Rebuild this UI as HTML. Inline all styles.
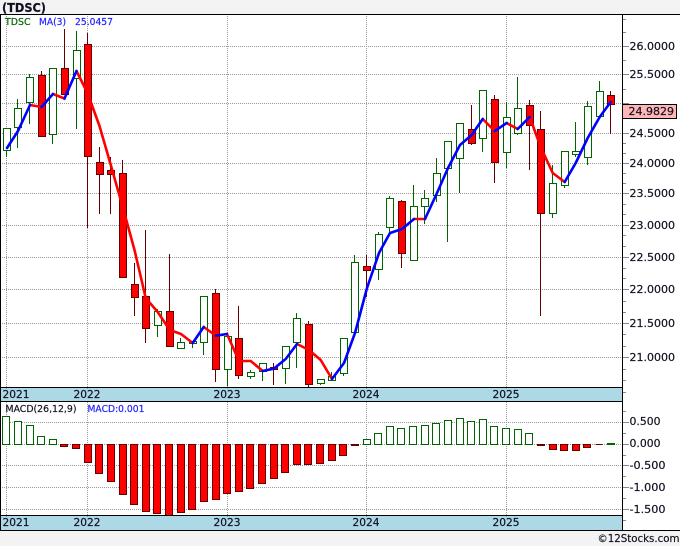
<!DOCTYPE html>
<html><head><meta charset="utf-8"><style>
html,body{margin:0;padding:0;background:#f3f3f3;width:680px;height:546px;overflow:hidden}
svg{display:block}
text{font-family:"DejaVu Sans","Liberation Sans",sans-serif;font-size:11px;fill:#111122;stroke:#111122;stroke-width:.2}
</style></head><body>
<svg width="680" height="546" viewBox="0 0 680 546" xmlns="http://www.w3.org/2000/svg">
<rect width="680" height="546" fill="#f3f3f3"/>
<rect x="0" y="14" width="680" height="516" fill="#fff"/>
<text x="2" y="12" style="font-weight:bold;font-size:12px" textLength="44" lengthAdjust="spacingAndGlyphs">(TDSC)</text>
<g shape-rendering="crispEdges">
<path fill="none" stroke="#999" stroke-dasharray="1 1" d="M0 46.5H622M0 74.5H622M0 103.5H622M0 133.5H622M0 163.5H622M0 193.5H622M0 225.5H622M0 257.5H622M0 289.5H622M0 323.5H622M0 357.5H622M0 422.5H622M0 444.5H622M0 465.5H622M0 487.5H622M0 509.5H622M6.5 14V530M87.5 14V530M227.5 14V530M366.5 14V530M506.5 14V530"/>
<path fill="none" stroke="#006400" d="M6.5 128V157M17.5 99V148M29.5 74V124M52.5 68V144M76.5 31V129M157.5 309V337M180.5 338V348M192.5 341V348M203.5 296V355M227.5 336V386M250.5 370V379M262.5 363V381M285.5 346V384M296.5 313V368M320.5 379V385M331.5 372V380M343.5 338V376M354.5 255V332M378.5 232V280M389.5 196V232M413.5 185V260M424.5 190V224M436.5 158V202M447.5 141V242M459.5 123V193M482.5 90V152M506.5 102V168M517.5 77V135M552.5 165V218M564.5 151V188M575.5 122V157M587.5 101V165M599.5 81V116"/>
<path fill="none" stroke="#660000" d="M41.5 71V136M64.5 29V94M87.5 33V228M99.5 147V214M110.5 157V214M122.5 160V277M134.5 263V316M145.5 230V343M169.5 254V346M215.5 289V382M238.5 306V379M273.5 363V385M308.5 321V387M366.5 255V297M401.5 200V268M471.5 105V145M494.5 95V183M529.5 100V170M540.5 111V316M610.5 91V134"/>
<path fill="#fff" stroke="#006400" d="M3.5 128.5h7v22h-7zM14.5 108.5h7v19h-7zM26.5 77.5h7v25h-7zM49.5 68.5h7v66h-7zM73.5 50.5h7v28h-7zM154.5 311.5h7v14h-7zM177.5 342.5h7v6h-7zM189.5 341.5h7v2h-7zM200.5 296.5h7v46h-7zM224.5 336.5h7v33h-7zM247.5 372.5h7v4h-7zM259.5 363.5h7v8h-7zM282.5 346.5h7v22h-7zM293.5 318.5h7v24h-7zM317.5 379.5h7v4h-7zM328.5 376.5h7v4h-7zM340.5 338.5h7v35h-7zM351.5 262.5h7v70h-7zM375.5 234.5h7v35h-7zM386.5 198.5h7v29h-7zM410.5 206.5h7v54h-7zM421.5 198.5h7v8h-7zM433.5 173.5h7v22h-7zM444.5 141.5h7v27h-7zM456.5 123.5h7v35h-7zM479.5 90.5h7v48h-7zM503.5 117.5h7v35h-7zM514.5 108.5h7v25h-7zM549.5 183.5h7v30h-7zM561.5 151.5h7v34h-7zM572.5 151.5h7v3h-7zM584.5 106.5h7v51h-7zM596.5 91.5h7v25h-7z"/>
<path fill="#f00" stroke="#660000" d="M38.5 75.5h7v61h-7zM61.5 68.5h7v26h-7zM84.5 44.5h7v112h-7zM96.5 162.5h7v12h-7zM107.5 170.5h7v4h-7zM119.5 173.5h7v104h-7zM131.5 284.5h7v13h-7zM142.5 296.5h7v32h-7zM166.5 311.5h7v35h-7zM212.5 293.5h7v76h-7zM235.5 338.5h7v37h-7zM270.5 367.5h7v2h-7zM305.5 324.5h7v60h-7zM363.5 266.5h7v4h-7zM398.5 201.5h7v52h-7zM468.5 129.5h7v14h-7zM491.5 99.5h7v63h-7zM526.5 105.5h7v20h-7zM537.5 129.5h7v84h-7zM607.5 95.5h7v9h-7z"/>
<path fill="#fff" stroke="#006400" d="M2.500 416.5h7v28h-7zM14.5 421.5h7v23h-7zM26.5 425.5h7v19h-7zM37.500 436.5h7v8h-7zM49.5 439.5h7v5h-7zM363.5 439.5h7v5h-7zM374.500 433.5h7v11h-7zM386.5 426.5h7v18h-7zM397.500 428.5h7v16h-7zM409.500 426.5h7v18h-7zM421.5 425.5h7v19h-7zM432.500 423.5h7v21h-7zM444.5 420.5h7v24h-7zM456.5 418.5h7v26h-7zM467.500 421.5h7v23h-7zM479.5 419.5h7v25h-7zM490.500 426.5h7v18h-7zM502.500 428.5h7v16h-7zM514.5 429.5h7v15h-7zM525.500 433.5h7v11h-7zM607.5 443.5h7v1h-7z"/>
<path fill="#f00" stroke="#660000" d="M60.500 444.5h7v2h-7zM72.500 444.5h7v4h-7zM84.5 444.5h7v18h-7zM95.500 444.5h7v29h-7zM107.5 444.5h7v37h-7zM119.5 444.5h7v50h-7zM130.500 444.5h7v60h-7zM142.5 444.5h7v67h-7zM153.500 444.5h7v69h-7zM165.500 444.5h7v71h-7zM177.5 444.5h7v68h-7zM188.500 444.5h7v65h-7zM200.5 444.5h7v57h-7zM212.5 444.5h7v55h-7zM223.500 444.5h7v49h-7zM235.5 444.5h7v47h-7zM246.500 444.5h7v44h-7zM258.500 444.5h7v39h-7zM270.5 444.5h7v34h-7zM281.500 444.5h7v28h-7zM293.5 444.5h7v20h-7zM304.500 444.5h7v20h-7zM316.500 444.5h7v19h-7zM328.5 444.5h7v16h-7zM339.500 444.5h7v11h-7zM351.5 444.5h7v1h-7zM537.5 444.5h7v1h-7zM549.5 444.5h7v5h-7zM560.500 444.5h7v6h-7zM572.5 444.5h7v6h-7zM583.500 444.5h7v3h-7zM595.500 444.5h7v0h-7z"/>
</g>
<g fill="none" stroke-width="2.6" stroke-linejoin="round" stroke-linecap="round">
<path stroke="#f00" d="M30 105L41.5 107M53 94L64.5 98.5M76.5 71L87.5 93L99.5 126L110.5 164L123 208L134.5 250L145.7 298L157.7 312L169.7 330L181 334L192.7 343M203.7 327L216 335.7M227 334L239 361L250.7 361L262.7 371M297 344L309 350L320.7 360L332 379M414 219L425 219M482.7 119L494.7 131M506.7 123L517.7 129M529.7 117L540.7 147L552.7 173L564.7 182"/>
<path stroke="#00f" d="M7 148L18 131L30 105M41.5 107L53 94M64.5 98.5L76.5 71M192.7 343L203.7 327M216 335.7L227 334M262.7 371L273.7 368.7L285.7 359L297 344M332 379L344 363L355 333L367 288L379 253L390 233L402 229L414 219M425 219L437 193L448 168L460 145L471.7 135L482.7 119M494.7 131L506.7 123M517.7 129L529.7 117M564.7 182L575.7 163L587.7 138L599.7 117L610.7 102"/>
</g>
<g shape-rendering="crispEdges">
<rect x="1" y="388" width="621" height="13" fill="#add8e6"/>
<rect x="1" y="516" width="621" height="14" fill="#add8e6"/>
<path fill="none" stroke="#999" stroke-dasharray="1 1" d="M6.5 388V390M87.5 388V390M227.5 388V390M366.5 388V390M506.5 388V390M6.5 516V518M87.5 516V518M227.5 516V518M366.5 516V518M506.5 516V518"/>
<path fill="none" stroke="#888" d="M623 19.500h3M623 32.500h3M623 46.500h6M623 60.500h3M623 74.500h6M623 89.500h3M623 103.500h6M623 143.500h3M623 133.500h6M623 153.500h3M623 163.500h6M623 173.500h3M623 183.500h3M623 193.500h6M623 204.500h3M623 214.500h3M623 225.500h6M623 235.500h3M623 246.500h3M623 257.500h6M623 268.500h3M623 278.500h3M623 289.500h6M623 301.500h3M623 312.500h3M623 323.500h6M623 334.500h3M623 346.500h3M623 357.500h6M623 369.500h3M623 380.500h3M623 392.500h3M623 411.500h3M623 422.500h6M623 433.500h3M623 444.500h6M623 455.500h3M623 465.500h6M623 476.500h3M623 487.500h6M623 498.500h3M623 509.500h6M623 520.500h3"/>
<path fill="none" stroke="#000" d="M0 14.500H680M0.500 14V530M0 387.500H622M0 401.500H622M0 515.500H622M0 530.500H680M622.500 14V530"/>
<rect x="622.500" y="104.500" width="54" height="14" fill="#ffb6b6" stroke="#000"/>
</g>
<rect x="623" y="105" width="53" height="13" fill="#ffb6b6"/>
<g>
<text x="5" y="25" style="font-size:10px;fill:#006400;stroke:#006400" textLength="25.500" lengthAdjust="spacingAndGlyphs">TDSC</text>
<text x="39" y="25" style="font-size:10px;fill:#2222ff;stroke:#2222ff" textLength="27" lengthAdjust="spacingAndGlyphs">MA(3)</text>
<text x="75" y="25" style="font-size:10px;fill:#2222ff;stroke:#2222ff" textLength="38" lengthAdjust="spacingAndGlyphs">25.0457</text>
<text x="5.500" y="412" style="font-size:10px" textLength="71" lengthAdjust="spacingAndGlyphs">MACD(26,12,9)</text>
<text x="87.500" y="412" style="font-size:10px;fill:#2222ff;stroke:#2222ff" textLength="57" lengthAdjust="spacingAndGlyphs">MACD:0.001</text>
<text x="629.500" y="50" textLength="45.500" lengthAdjust="spacingAndGlyphs">26.0000</text>
<text x="629.500" y="78" textLength="45.500" lengthAdjust="spacingAndGlyphs">25.5000</text>
<text x="629.500" y="137" textLength="45.500" lengthAdjust="spacingAndGlyphs">24.5000</text>
<text x="629.500" y="167" textLength="45.500" lengthAdjust="spacingAndGlyphs">24.0000</text>
<text x="629.500" y="197" textLength="45.500" lengthAdjust="spacingAndGlyphs">23.5000</text>
<text x="629.500" y="229" textLength="45.500" lengthAdjust="spacingAndGlyphs">23.0000</text>
<text x="629.500" y="261" textLength="45.500" lengthAdjust="spacingAndGlyphs">22.5000</text>
<text x="629.500" y="293" textLength="45.500" lengthAdjust="spacingAndGlyphs">22.0000</text>
<text x="629.500" y="327" textLength="45.500" lengthAdjust="spacingAndGlyphs">21.5000</text>
<text x="629.500" y="361" textLength="45.500" lengthAdjust="spacingAndGlyphs">21.0000</text>
<text x="628.500" y="115" textLength="45.500" lengthAdjust="spacingAndGlyphs">24.9829</text>
<text x="629.500" y="425" textLength="31" lengthAdjust="spacingAndGlyphs">0.500</text>
<text x="629.500" y="447" textLength="31" lengthAdjust="spacingAndGlyphs">0.000</text>
<text x="629.500" y="469" textLength="36" lengthAdjust="spacingAndGlyphs">-0.500</text>
<text x="629.500" y="491" textLength="36" lengthAdjust="spacingAndGlyphs">-1.000</text>
<text x="629.500" y="513" textLength="36" lengthAdjust="spacingAndGlyphs">-1.500</text>
<text x="2.500" y="398" textLength="27" lengthAdjust="spacingAndGlyphs">2021</text>
<text x="73.500" y="398" textLength="27" lengthAdjust="spacingAndGlyphs">2022</text>
<text x="213.500" y="398" textLength="27" lengthAdjust="spacingAndGlyphs">2023</text>
<text x="352.500" y="398" textLength="27" lengthAdjust="spacingAndGlyphs">2024</text>
<text x="492.500" y="398" textLength="27" lengthAdjust="spacingAndGlyphs">2025</text>
<text x="2.500" y="526" textLength="27" lengthAdjust="spacingAndGlyphs">2021</text>
<text x="73.500" y="526" textLength="27" lengthAdjust="spacingAndGlyphs">2022</text>
<text x="213.500" y="526" textLength="27" lengthAdjust="spacingAndGlyphs">2023</text>
<text x="352.500" y="526" textLength="27" lengthAdjust="spacingAndGlyphs">2024</text>
<text x="492.500" y="526" textLength="27" lengthAdjust="spacingAndGlyphs">2025</text>
<text x="597.500" y="542" textLength="82" lengthAdjust="spacingAndGlyphs">©12Stocks.com</text>
</g>
</svg>
</body></html>
